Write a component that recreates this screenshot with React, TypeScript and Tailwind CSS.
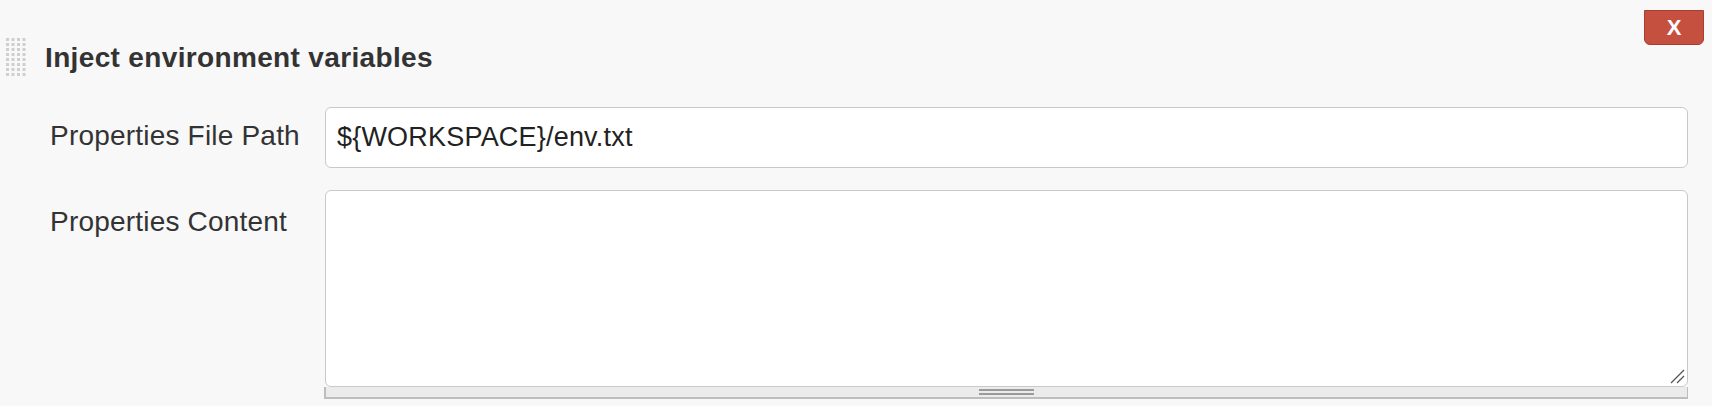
import React from "react";

function Grip() {
  const dots: JSX.Element[] = [];
  for (let r = 0; r < 8; r++) {
    for (let c = 0; c < 4; c++) {
      dots.push(
        <rect key={`${r}-${c}`} x={c * 5.5} y={r * 5} width={3} height={3} fill="#cfcfcf" />
      );
    }
  }
  return (
    <svg width="22" height="40" viewBox="0 0 22 40" className="shrink-0">
      {dots}
    </svg>
  );
}

export default function App() {
  return (
    <div
      className="relative w-full h-[406px] bg-[#f8f8f8] text-[#333] overflow-hidden"
      style={{ fontFamily: '"Liberation Sans", Arial, sans-serif' }}
    >
      <button className="absolute right-[8px] top-[10px] w-[60px] h-[35px] bg-[#c5503f] border border-[#a83e30] rounded-b-[6px] text-white font-bold text-[22px] leading-none flex items-center justify-center">
        X
      </button>

      <div className="flex items-center mt-[37px] h-[41px] pl-[6px]">
        <Grip />
        <div className="ml-[17px] text-[28px] font-bold leading-[32px] tracking-[0.35px]">
          Inject environment variables
        </div>
      </div>

      <div className="flex flex-col gap-[22px] mt-[29px] pl-[50px] pr-[24px]">
        <div className="flex">
          <div className="w-[275px] shrink-0 pt-[13px] text-[28px] leading-[32px] tracking-[0.2px]">
            Properties File Path
          </div>
          <input
            readOnly
            value="${WORKSPACE}/env.txt"
            className="flex-1 h-[61px] bg-white border border-[#c9c9c9] rounded-[6px] pl-[11px] text-[27px] tracking-[0.2px] text-[#222] outline-none"
            style={{ fontFamily: '"Liberation Sans", Arial, sans-serif' }}
          />
        </div>
        <div className="flex">
          <div className="w-[275px] shrink-0 pt-[16px] text-[28px] leading-[32px] tracking-[0.2px]">
            Properties Content
          </div>
          <div className="flex-1 flex flex-col">
            <div className="relative h-[197px] bg-white border border-[#c9c9c9] rounded-[6px]">
              <svg
                width="16"
                height="16"
                viewBox="0 0 16 16"
                className="absolute right-[2px] bottom-[2px]"
              >
                <line x1="2" y1="15" x2="15" y2="2" stroke="#555" strokeWidth="1.3" />
                <line x1="8" y1="15" x2="15" y2="8" stroke="#555" strokeWidth="1.3" />
              </svg>
            </div>
            <div className="h-[12px] -ml-[1px] bg-[#ebebeb] border-l-2 border-b-2 border-r border-[#bdbdbd] flex items-center justify-center">
              <div className="w-[55px] h-[6px] flex flex-col justify-between">
                <div className="h-[2px] bg-[#9a9a9a]" />
                <div className="h-[2px] bg-[#9a9a9a]" />
              </div>
            </div>
          </div>
        </div>
      </div>
    </div>
  );
}
